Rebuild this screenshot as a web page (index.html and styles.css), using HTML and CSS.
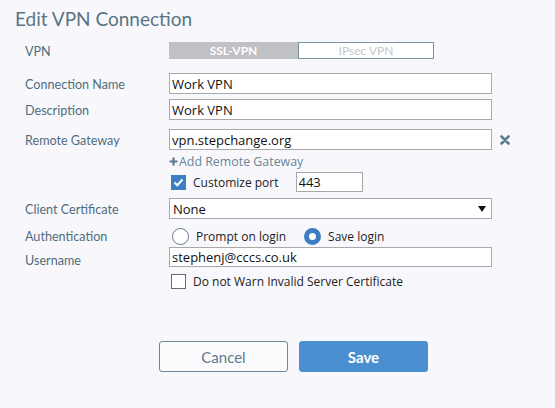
FILE: index.html
```html
<!DOCTYPE html>
<html>
<head>
<meta charset="utf-8">
<link rel="stylesheet" href="styles.css">
</head>
<body>
<div class="dialog">
  <h1 class="title">Edit VPN Connection</h1>
  <div class="form">
    <div class="row row-vpn">
      <span class="label">VPN</span>
      <div class="toggle">
        <span class="seg seg-on">SSL-VPN</span>
        <span class="seg seg-off">IPsec VPN</span>
      </div>
    </div>
    <div class="row row-name">
      <span class="label">Connection Name</span>
      <input class="field" type="text" value="Work VPN">
    </div>
    <div class="row row-desc">
      <span class="label">Description</span>
      <input class="field" type="text" value="Work VPN">
    </div>
    <div class="row row-gw">
      <span class="label">Remote Gateway</span>
      <div class="withicon">
        <input class="field" type="text" value="vpn.stepchange.org">
        <svg class="xicon" width="10" height="10" viewBox="0 0 10 10"><path d="M1.5 1.5 L8.5 8.5 M8.5 1.5 L1.5 8.5" stroke="#5b7b8f" stroke-width="2.6" stroke-linecap="round"/></svg>
      </div>
    </div>
    <div class="row row-add">
      <span class="label"></span>
      <span class="addlink"><svg class="plus" width="9" height="9" viewBox="0 0 9 9"><path d="M4.5 0.5 V8.5 M0.5 4.5 H8.5" stroke="#5b7b8f" stroke-width="2.2"/></svg>Add Remote Gateway</span>
    </div>
    <div class="row row-port">
      <span class="label"></span>
      <div class="inline">
        <span class="cb cb-on"><svg width="15" height="15" viewBox="0 0 15 15"><path d="M3.5 7.5 L6.3 10.2 L11.5 4.5" fill="none" stroke="#fff" stroke-width="2"/></svg></span>
        <span class="opt">Customize port</span>
        <input class="field port" type="text" value="443">
      </div>
    </div>
    <div class="row row-cert">
      <span class="label">Client Certificate</span>
      <div class="select">
        <span>None</span>
        <svg width="8" height="6" viewBox="0 0 8 6"><path d="M0 0 H8 L4 6 Z" fill="#111"/></svg>
      </div>
    </div>
    <div class="row row-auth">
      <span class="label">Authentication</span>
      <div class="inline">
        <span class="radio"></span>
        <span class="opt opt-prompt">Prompt on login</span>
        <span class="radio radio-on"></span>
        <span class="opt">Save login</span>
      </div>
    </div>
    <div class="row row-user">
      <span class="label label-user">Username</span>
      <input class="field" type="text" value="stephenj@cccs.co.uk">
    </div>
    <div class="row row-warn">
      <span class="label"></span>
      <div class="inline">
        <span class="cb"></span>
        <span class="opt">Do not Warn Invalid Server Certificate</span>
      </div>
    </div>
  </div>
  <div class="buttons">
    <button class="btn btn-cancel">Cancel</button>
    <button class="btn btn-save">Save</button>
  </div>
</div>
</body>
</html>
```

FILE: styles.css
```css
html, body {
  margin: 0;
  padding: 0;
  background: #f8f8fc;
}
.dialog {
  padding: 6px 0 0 15px;
  width: 540px;
  box-sizing: border-box;
}
.title {
  margin: 0;
  font-family: Lato, "Liberation Sans", sans-serif;
  font-weight: 400;
  font-size: 19px;
  line-height: 25px;
  color: #5a7484;
}
.form {
  margin-left: 10px;
}
.row {
  display: grid;
  grid-template-columns: 144px 1fr;
  align-items: center;
}
.label {
  font-family: Lato, "Liberation Sans", sans-serif;
  font-size: 12.6px;
  color: #4f6c7e;
  line-height: 16px;
  position: relative;
  top: 1px;
}
.label-user { top: 4px; }
.row-vpn { margin-top: 11px; height: 17px; }
.row-name { margin-top: 14px; height: 21px; }
.row-desc { margin-top: 5px; height: 21px; }
.row-gw { margin-top: 9px; height: 21px; }
.row-add { margin-top: 1px; height: 20px; }
.row-port { margin-top: 1px; height: 20px; }
.row-cert { margin-top: 6px; height: 21px; }
.row-auth { margin-top: 8px; height: 18px; }
.row-user { margin-top: 2px; height: 20px; }
.row-warn { margin-top: 6px; height: 16px; }

.toggle {
  display: flex;
  height: 17px;
}
.seg {
  width: 129px;
  box-sizing: border-box;
  display: flex;
  align-items: center;
  justify-content: center;
  font-family: Lato, "Liberation Sans", sans-serif;
  font-size: 12px;
}
.seg-on {
  background: #c0c1c5;
  color: #fff;
  font-weight: 700;
}
.seg-off {
  width: 136px;
  background: #fff;
  border: 1px solid #7b93a7;
  color: #c3c6cc;
}
.field {
  box-sizing: border-box;
  width: 323px;
  height: 100%;
  margin: 0;
  border: 1px solid #a9a9a9;
  background: #fff;
  padding: 0 2px;
  font-family: "Open Sans", "Noto Sans", sans-serif;
  font-size: 13px;
  color: #111;
  outline: none;
}
.withicon {
  display: flex;
  align-items: center;
  height: 100%;
  gap: 8px;
}
.xicon { display: block; }
.addlink {
  display: flex;
  align-items: center;
  font-family: "Open Sans", "Noto Sans", sans-serif;
  font-size: 12.4px;
  color: #6a8596;
}
.plus {
  display: block;
  margin-right: 1px;
}
.inline {
  display: flex;
  align-items: center;
  height: 100%;
}
.cb {
  box-sizing: border-box;
  width: 15px;
  height: 15px;
  border: 1px solid #5d6e7e;
  background: #fff;
  margin-left: 2px;
  display: flex;
}
.cb-on {
  border: none;
  background: #3d7fc1;
}
.opt {
  font-family: "Open Sans", "Noto Sans", sans-serif;
  font-size: 12px;
  color: #222;
  margin-left: 7px;
}
.port {
  width: 67px;
  margin-left: 17px;
}
.select {
  box-sizing: border-box;
  width: 323px;
  height: 100%;
  border: 1px solid #a9a9a9;
  background: #fff;
  display: flex;
  align-items: center;
  justify-content: space-between;
  padding: 0 5px 0 3px;
  font-family: "Open Sans", "Noto Sans", sans-serif;
  font-size: 13px;
  color: #111;
}
.radio {
  box-sizing: border-box;
  width: 17px;
  height: 17px;
  border-radius: 50%;
  border: 1px solid #60788a;
  background: #fff;
  margin-left: 3px;
}
.radio-on {
  border: 5px solid #3a7dc0;
  background: #fff;
  margin-left: 0;
}
.opt-prompt {
  margin-right: 18px;
}
.buttons {
  margin-top: 52px;
  margin-left: 144px;
  display: flex;
  gap: 11px;
}
.btn {
  width: 129px;
  height: 31px;
  border-radius: 3px;
  font-family: Lato, "Liberation Sans", sans-serif;
  font-size: 15px;
  padding: 0;
  cursor: pointer;
}
.btn-cancel {
  background: #fbfbfd;
  border: 1px solid #6e8797;
  color: #5e7b8d;
}
.btn-save {
  background: #4a8fd0;
  border: 1px solid #4a8fd0;
  color: #fff;
  font-weight: 700;
}
```
